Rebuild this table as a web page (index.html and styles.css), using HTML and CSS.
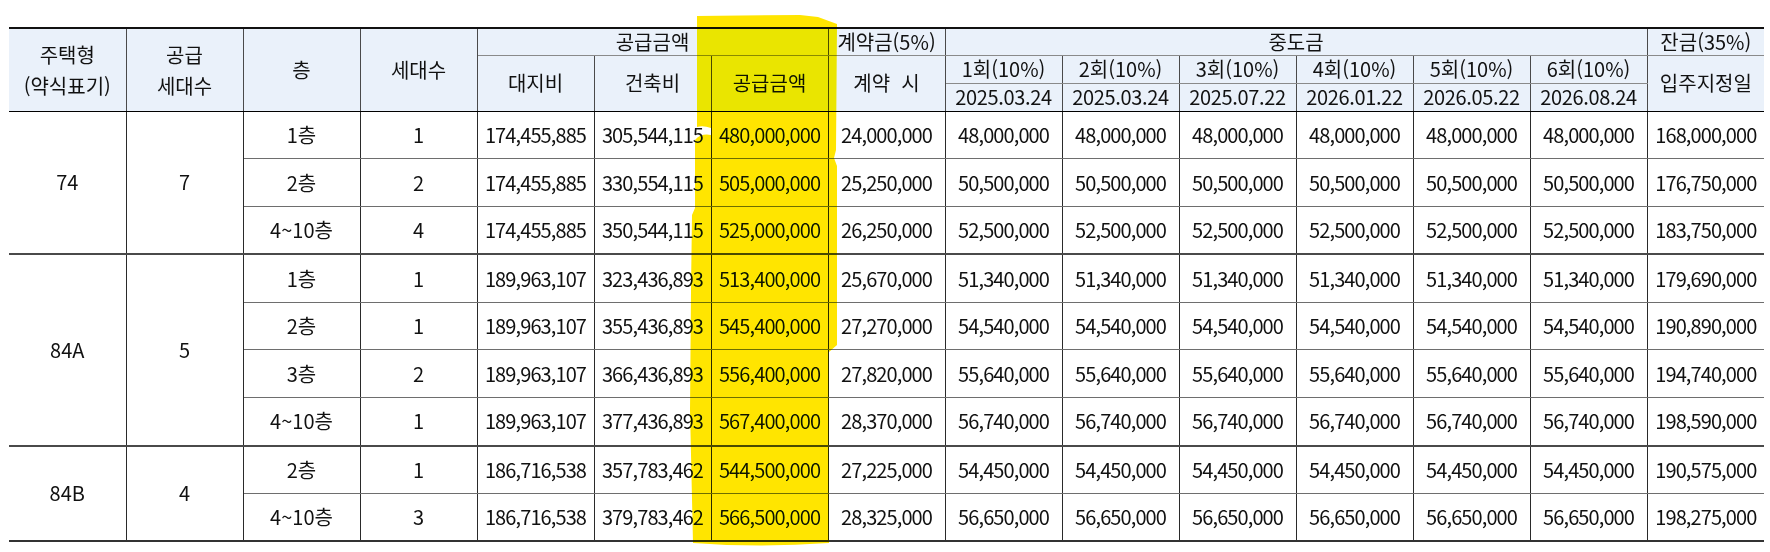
FILE: index.html
```html
<!DOCTYPE html>
<html lang="ko">
<head>
<meta charset="utf-8">
<title>공급금액 및 납부일정</title>
<link rel="stylesheet" href="styles.css">
</head>
<body>
<table class="price-table">
  <colgroup>
    <col><col><col><col><col><col><col><col><col><col><col><col><col><col><col>
  </colgroup>
  <thead>
    <tr class="h1">
      <th rowspan="3" class="tall">주택형<br>(약식표기)</th>
      <th rowspan="3" class="tall">공급<br>세대수</th>
      <th rowspan="3" class="tall">층</th>
      <th rowspan="3" class="tall">세대수</th>
      <th colspan="3" class="sub">공급금액</th>
      <th class="sub">계약금(5%)</th>
      <th colspan="6" class="sub">중도금</th>
      <th class="sub">잔금(35%)</th>
    </tr>
    <tr class="h2">
      <th rowspan="2">대지비</th>
      <th rowspan="2">건축비</th>
      <th rowspan="2">공급금액</th>
      <th rowspan="2">계약&nbsp;&nbsp;시</th>
      <th class="sub">1회(10%)</th>
      <th class="sub">2회(10%)</th>
      <th class="sub">3회(10%)</th>
      <th class="sub">4회(10%)</th>
      <th class="sub">5회(10%)</th>
      <th class="sub">6회(10%)</th>
      <th rowspan="2">입주지정일</th>
    </tr>
    <tr class="h3">
      <th class="date">2025.03.24</th>
      <th class="date">2025.03.24</th>
      <th class="date">2025.07.22</th>
      <th class="date">2026.01.22</th>
      <th class="date">2026.05.22</th>
      <th class="date">2026.08.24</th>
    </tr>
  </thead>
  <tbody>
    <tr class="group-start">
      <td rowspan="3" class="plain">74</td>
      <td rowspan="3" class="plain">7</td>
      <td class="plain">1층</td><td class="plain">1</td>
      <td>174,455,885</td><td>305,544,115</td><td>480,000,000</td><td>24,000,000</td>
      <td>48,000,000</td><td>48,000,000</td><td>48,000,000</td><td>48,000,000</td><td>48,000,000</td><td>48,000,000</td>
      <td>168,000,000</td>
    </tr>
    <tr>
      <td class="plain">2층</td><td class="plain">2</td>
      <td>174,455,885</td><td>330,554,115</td><td>505,000,000</td><td>25,250,000</td>
      <td>50,500,000</td><td>50,500,000</td><td>50,500,000</td><td>50,500,000</td><td>50,500,000</td><td>50,500,000</td>
      <td>176,750,000</td>
    </tr>
    <tr>
      <td class="plain">4~10층</td><td class="plain">4</td>
      <td>174,455,885</td><td>350,544,115</td><td>525,000,000</td><td>26,250,000</td>
      <td>52,500,000</td><td>52,500,000</td><td>52,500,000</td><td>52,500,000</td><td>52,500,000</td><td>52,500,000</td>
      <td>183,750,000</td>
    </tr>
    <tr class="group-start">
      <td rowspan="4" class="plain">84A</td>
      <td rowspan="4" class="plain">5</td>
      <td class="plain">1층</td><td class="plain">1</td>
      <td>189,963,107</td><td>323,436,893</td><td>513,400,000</td><td>25,670,000</td>
      <td>51,340,000</td><td>51,340,000</td><td>51,340,000</td><td>51,340,000</td><td>51,340,000</td><td>51,340,000</td>
      <td>179,690,000</td>
    </tr>
    <tr>
      <td class="plain">2층</td><td class="plain">1</td>
      <td>189,963,107</td><td>355,436,893</td><td>545,400,000</td><td>27,270,000</td>
      <td>54,540,000</td><td>54,540,000</td><td>54,540,000</td><td>54,540,000</td><td>54,540,000</td><td>54,540,000</td>
      <td>190,890,000</td>
    </tr>
    <tr>
      <td class="plain">3층</td><td class="plain">2</td>
      <td>189,963,107</td><td>366,436,893</td><td>556,400,000</td><td>27,820,000</td>
      <td>55,640,000</td><td>55,640,000</td><td>55,640,000</td><td>55,640,000</td><td>55,640,000</td><td>55,640,000</td>
      <td>194,740,000</td>
    </tr>
    <tr>
      <td class="plain">4~10층</td><td class="plain">1</td>
      <td>189,963,107</td><td>377,436,893</td><td>567,400,000</td><td>28,370,000</td>
      <td>56,740,000</td><td>56,740,000</td><td>56,740,000</td><td>56,740,000</td><td>56,740,000</td><td>56,740,000</td>
      <td>198,590,000</td>
    </tr>
    <tr class="group-start">
      <td rowspan="2" class="plain">84B</td>
      <td rowspan="2" class="plain">4</td>
      <td class="plain">2층</td><td class="plain">1</td>
      <td>186,716,538</td><td>357,783,462</td><td>544,500,000</td><td>27,225,000</td>
      <td>54,450,000</td><td>54,450,000</td><td>54,450,000</td><td>54,450,000</td><td>54,450,000</td><td>54,450,000</td>
      <td>190,575,000</td>
    </tr>
    <tr>
      <td class="plain">4~10층</td><td class="plain">3</td>
      <td>186,716,538</td><td>379,783,462</td><td>566,500,000</td><td>28,325,000</td>
      <td>56,650,000</td><td>56,650,000</td><td>56,650,000</td><td>56,650,000</td><td>56,650,000</td><td>56,650,000</td>
      <td>198,275,000</td>
    </tr>
  </tbody>
</table>

<svg class="highlight" width="1770" height="552" viewBox="0 0 1770 552" aria-hidden="true">
  <path d="M697,16 L800,15 L818,17 L837,24 L836,150 L834,158 L837,166 L837,345 L829,352 L829,543 Q760,548 693,543 L690,410 L691,290 L692,215 L695,208 L695,140 Q701,133 711,135 L711,128 Q703,125 697,127 Z"/>
</svg>
</body>
</html>
```

FILE: styles.css
```css
html, body {
  margin: 0;
  padding: 0;
  background: #ffffff;
}

body {
  position: relative;
  width: 1770px;
  height: 552px;
  overflow: hidden;
  font-family: "Noto Sans CJK KR", "Malgun Gothic", sans-serif;
  color: #111111;
}

.price-table {
  border-collapse: collapse;
  table-layout: fixed;
  width: 1755px;
  margin: 27px 0 0 9px;
  font-size: 20px;
  border-top: 2px solid #111111;
  border-bottom: 2px solid #333333;
  border-left: hidden;
  border-right: hidden;
}

.price-table col {
  width: 117px;
}

.price-table th,
.price-table td {
  padding: 0;
  text-align: center;
  vertical-align: middle;
  white-space: nowrap;
  border-left: 1px solid #2a2a2a;
  border-right: 1px solid #2a2a2a;
  line-height: 30px;
  overflow: visible;
}

.price-table th {
  background: #eaf1fa;
  font-weight: 400;
  line-height: 24px;
  border-bottom: 1px solid #000000;
  border-left-color: #4a4a4a;
  border-right-color: #4a4a4a;
}

.price-table th.tall {
  line-height: 31px;
}

.price-table th.sub {
  border-bottom: 1px solid #8a8a8a;
}

.price-table th.date {
  letter-spacing: -0.35px;
}

.h1 { height: 27px; }
.h2 { height: 28px; }
.h3 { height: 28px; }

.price-table tbody tr {
  height: 47.8px;
}

.price-table td {
  border-top: 1px solid #6e6e6e;
  border-bottom: 1px solid #6e6e6e;
  letter-spacing: -0.9px;
}

.price-table td.plain {
  letter-spacing: 0;
}

.price-table tr.group-start td {
  border-top: 2px solid #4a4a4a;
}

.price-table tbody tr:first-child td {
  border-top: 1px solid #000000;
}

.highlight {
  position: absolute;
  left: 0;
  top: 0;
  pointer-events: none;
  mix-blend-mode: darken;
}

.highlight path {
  fill: #ffe500;
}
```
